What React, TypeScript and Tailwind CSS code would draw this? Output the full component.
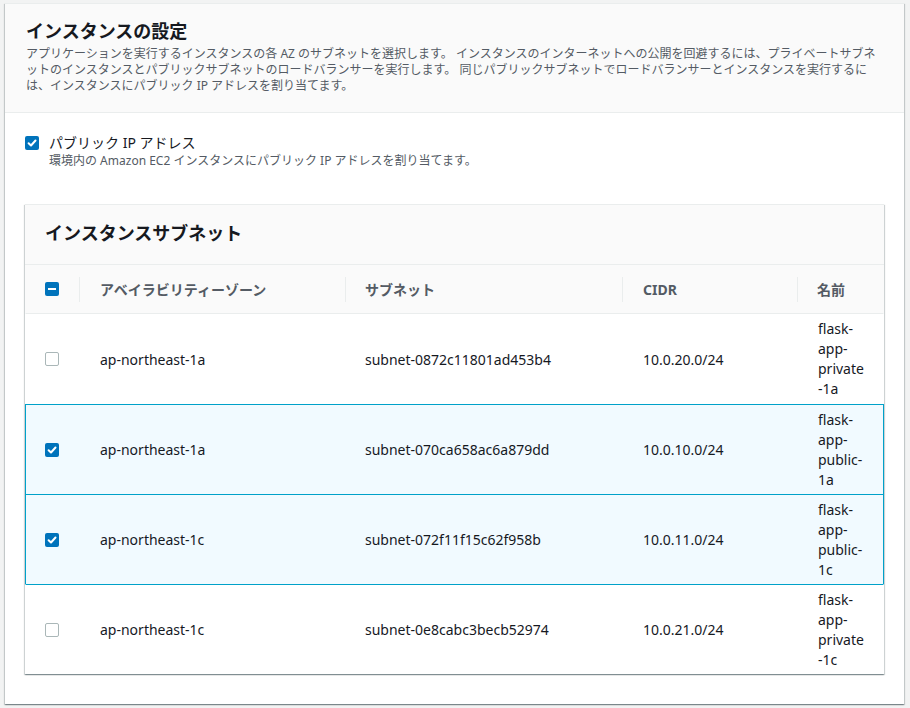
import React from 'react';

type Subnet = {
  az: string;
  id: string;
  cidr: string;
  name: string[];
  selected: boolean;
};

const subnets: Subnet[] = [
  { az: 'ap-northeast-1a', id: 'subnet-0872c11801ad453b4', cidr: '10.0.20.0/24', name: ['flask-', 'app-', 'private', '-1a'], selected: false },
  { az: 'ap-northeast-1a', id: 'subnet-070ca658ac6a879dd', cidr: '10.0.10.0/24', name: ['flask-', 'app-', 'public-', '1a'], selected: true },
  { az: 'ap-northeast-1c', id: 'subnet-072f11f15c62f958b', cidr: '10.0.11.0/24', name: ['flask-', 'app-', 'public-', '1c'], selected: true },
  { az: 'ap-northeast-1c', id: 'subnet-0e8cabc3becb52974', cidr: '10.0.21.0/24', name: ['flask-', 'app-', 'private', '-1c'], selected: false },
];

const cols = 'grid grid-cols-[54px_266px_277px_175px_1fr]';

const Checkbox = ({ state }: { state: 'on' | 'off' | 'mixed' }) => {
  if (state === 'off') {
    return <span className="block w-[14px] h-[14px] rounded-[2px] border border-[#aab7b8] bg-white" />;
  }
  return (
    <span className="flex w-[14px] h-[14px] rounded-[2px] bg-[#0073bb] items-center justify-center">
      {state === 'on' ? (
        <svg width="10" height="10" viewBox="0 0 10 10">
          <path d="M1.6 5.2 L4 7.5 L8.5 2.5" fill="none" stroke="white" strokeWidth="2" strokeLinecap="round" strokeLinejoin="round" />
        </svg>
      ) : (
        <span className="block w-[8px] h-[2px] bg-white" />
      )}
    </span>
  );
};

const cardShadow =
  'shadow-[0_1px_1px_0_rgba(0,28,36,0.3),1px_1px_1px_0_rgba(0,28,36,0.15),-1px_1px_1px_0_rgba(0,28,36,0.15)]';

export default function App() {
  return (
    <div
      className="h-[708px] bg-[#f2f3f3] pt-[3px] pl-[5px] text-[#16191f]"
      style={{ fontFamily: '"Noto Sans", "Noto Sans CJK JP", sans-serif' }}
    >
      <div className={`w-[899px] h-[701px] bg-white border-t border-[#eaeded] ${cardShadow}`}>
        {/* header */}
        <div className="bg-[#fafafa] border-b border-[#eaeded] px-[21px] pt-[16px] pb-[18px]">
          <h2 className="text-[18px] leading-[22px] font-bold">インスタンスの設定</h2>
          <div className="mt-[4px] text-[12px] leading-[16px] text-[#545b64] whitespace-nowrap">
            <div>アプリケーションを実行するインスタンスの各 AZ のサブネットを選択します。 インスタンスのインターネットへの公開を回避するには、プライベートサブネ</div>
            <div>ットのインスタンスとパブリックサブネットのロードバランサーを実行します。 同じパブリックサブネットでロードバランサーとインスタンスを実行するに</div>
            <div>は、インスタンスにパブリック IP アドレスを割り当てます。</div>
          </div>
        </div>

        {/* body */}
        <div className="px-[20px] pt-[20px]">
          <div className="flex items-center gap-[10px] text-[14px] leading-[20px]">
            <Checkbox state="on" />
            <span>パブリック IP アドレス</span>
          </div>
          <div className="ml-[24px] text-[12px] leading-[16px] text-[#545b64]">
            環境内の Amazon EC2 インスタンスにパブリック IP アドレスを割り当てます。
          </div>

          <div className={`mt-[35px] bg-white border-t border-[#eaeded] ${cardShadow}`}>
            <div className="h-[60px] bg-[#fafafa] border-b border-[#eaeded] flex items-center px-[20px] pb-[3px]">
              <h3 className="text-[18px] leading-[22px] font-bold">インスタンスサブネット</h3>
            </div>

            <div className={`${cols} h-[48px] bg-[#fafafa] items-center text-[14px] font-bold text-[#545b64]`}>
              <div className="pl-[20px]">
                <Checkbox state="mixed" />
              </div>
              <div className="flex items-center h-[25px] border-l border-[#eaeded] pl-[20px]">アベイラビリティーゾーン</div>
              <div className="flex items-center h-[25px] border-l border-[#eaeded] pl-[19px]">サブネット</div>
              <div className="flex items-center h-[25px] border-l border-[#eaeded] pl-[20px]">CIDR</div>
              <div className="flex items-center h-[25px] border-l border-[#eaeded] pl-[19px]">名前</div>
            </div>

            {subnets.map((s, i) => {
              const prevSelected = i > 0 && subnets[i - 1].selected;
              const top = s.selected || prevSelected ? 'border-t-[#00a1c9]' : 'border-t-[#eaeded]';
              const sides = s.selected ? 'border-x-[#00a1c9] bg-[#f1faff]' : 'border-x-transparent';
              const h = i === 0 ? 'h-[91px]' : 'h-[90px]';
              return (
                <div key={s.id} className={`${cols} ${h} items-center text-[14px] border-t border-x ${top} ${sides}`}>
                  <div className="pl-[19px]">
                    <Checkbox state={s.selected ? 'on' : 'off'} />
                  </div>
                  <div className="pl-[20px]">{s.az}</div>
                  <div className="pl-[19px]">{s.id}</div>
                  <div className="pl-[20px]">{s.cidr}</div>
                  <div className="pl-[20px] leading-[20px]">
                    {s.name.map((l) => (
                      <div key={l}>{l}</div>
                    ))}
                  </div>
                </div>
              );
            })}
          </div>
        </div>
      </div>
    </div>
  );
}
